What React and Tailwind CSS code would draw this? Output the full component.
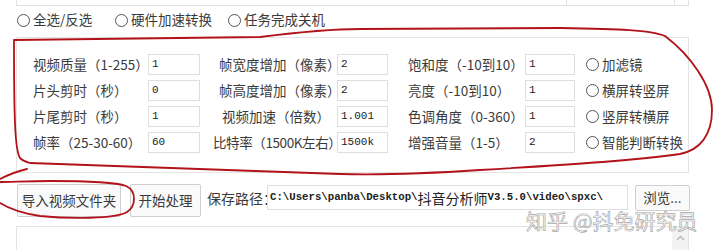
import React from "react";

const Radio = ({ label, className = "" }) => (
  <div className={`flex items-center ${className}`}>
    <span className="w-[13px] h-[13px] rounded-full border border-[#555] bg-white shrink-0" />
    <span className="ml-[3px] whitespace-nowrap">{label}</span>
  </div>
);

const Field = ({ value, w }) => (
  <div
    className={`${w} h-[21px] border border-[#dedede] bg-white flex items-center pl-[3px] text-[11px] text-[#222] shrink-0`}
    style={{ fontFamily: '"Liberation Mono", monospace' }}
  >
    {value}
  </div>
);

const rows = [
  { l1: "视频质量（1-255）", v1: "1", l2: "帧宽度增加（像素）", p2: "pl-[19px]", v2: "2", l3: "饱和度（-10到10）", v3: "1", r: "加滤镜" },
  { l1: "片头剪时（秒）", v1: "0", l2: "帧高度增加（像素）", p2: "pl-[19px]", v2: "2", l3: "亮度（-10到10）", v3: "1", r: "横屏转竖屏" },
  { l1: "片尾剪时（秒）", v1: "1", l2: "视频加速（倍数）", p2: "pl-[22px]", v2: "1.001", l3: "色调角度（0-360）", v3: "1", r: "竖屏转横屏" },
  { l1: "帧率（25-30-60）", v1: "60", l2: "比特率（1500K左右）", p2: "pl-[13px] tracking-[-0.4px]", v2: "1500k", l3: "增强音量（1-5）", v3: "2", r: "智能判断转换" },
];

export default function App() {
  return (
    <div
      className="relative w-[720px] h-[250px] bg-white overflow-hidden text-[13.5px] text-[#3a3a3a] leading-none"
      style={{ fontFamily: '"Noto Sans CJK SC", "Noto Sans", sans-serif' }}
    >
      {/* top list box */}
      <div className="ml-[16px] w-[673px] h-[6px] border-x border-b border-[#e2e2e2] flex">
        <div className="w-[550px] border-r border-[#e2e2e2]" />
        <div className="w-[108px] border-r border-[#e2e2e2]" />
      </div>

      {/* radios row */}
      <div className="mt-[6px] ml-[17px] h-[16px] flex items-center">
        <Radio label="全选/反选" className="w-[98px]" />
        <Radio label="硬件加速转换" className="w-[113px]" />
        <Radio label="任务完成关机" />
      </div>

      {/* group box */}
      <div className="mt-[9px] ml-[16px] w-[673px] h-[136px] border border-[#e4e4e4] pt-[16px] pl-[16px] flex flex-col gap-[5px]">
        {rows.map((r, i) => (
          <div key={i} className="flex items-center h-[21px]">
            <div className="w-[115px] whitespace-nowrap">{r.l1}</div>
            <Field value={r.v1} w="w-[52px]" />
            <div className={`w-[137px] whitespace-nowrap ${r.p2}`}>{r.l2}</div>
            <Field value={r.v2} w="w-[51px]" />
            <div className="w-[137px] whitespace-nowrap pl-[20px]">{r.l3}</div>
            <Field value={r.v3} w="w-[50px]" />
            <Radio label={r.r} className="ml-[11px]" />
          </div>
        ))}
      </div>

      {/* bottom action row */}
      <div className="mt-[11px] flex items-start h-[33px]">
        <div className="ml-[17px] w-[104px] h-[33px] border border-[#cfcfcf] rounded-[2px] bg-[#fafafa] flex items-center justify-center whitespace-nowrap">
          导入视频文件夹
        </div>
        <div className="ml-[9px] w-[71px] h-[33px] border border-[#cfcfcf] rounded-[2px] bg-[#fafafa] flex items-center justify-center whitespace-nowrap">
          开始处理
        </div>
        <div className="ml-[6px] w-[60px] h-[25px] mt-[1px] flex items-center whitespace-nowrap text-[14px]">
          保存路径：
        </div>
        <div
          className="w-[361px] h-[25px] mt-[1px] border border-[#dedede] bg-white flex items-center pl-[2px] text-[10.7px] text-[#222] whitespace-nowrap overflow-hidden font-bold"
          style={{ fontFamily: '"Liberation Mono", monospace' }}
        >
          C:\Users\panba\Desktop\
          <span
            className="text-[14px] font-normal"
            style={{ fontFamily: '"Noto Sans CJK SC", sans-serif' }}
          >
            抖音分析师
          </span>
          V3.5.0\video\spxc\
        </div>
        <div className="ml-[7px] w-[55px] h-[26px] mt-[1px] border border-[#cfcfcf] rounded-[2px] bg-[#fafafa] flex items-center justify-center whitespace-nowrap">
          浏览...
        </div>
      </div>

      {/* bottom list box */}
      <div className="mt-[9px] ml-[16px] w-[673px] h-[40px] border border-[#e4e4e4] flex justify-end">
        <div className="w-[16px] h-full bg-[#f3f3f3] flex justify-center pt-[8px]">
          <svg width="9" height="6" viewBox="0 0 9 6">
            <path d="M1 5 L4.5 1.5 L8 5" fill="none" stroke="#b5b5b5" strokeWidth="1.3" />
          </svg>
        </div>
      </div>

      {/* watermark */}
      <div
        className="absolute left-[526px] top-[210px] text-[21px] leading-none whitespace-nowrap text-white [-webkit-text-stroke:0.7px_#a8a8a8]"
        style={{ fontFamily: '"Noto Sans CJK SC", sans-serif' }}
      >
        知乎 @抖免研究员
      </div>

      {/* red annotations */}
      <svg className="absolute inset-0 pointer-events-none" width="720" height="250" viewBox="0 0 720 250">
        <g fill="none" stroke="#b3121a" strokeWidth="1.8" strokeLinecap="round" strokeLinejoin="round">
          <path d="M20 158 C15 150 14 120 14 40 L260 37 C300 32 330 29 360 29 L560 28 C620 29 650 30 665 36 C690 55 712 85 712 110 C712 135 700 150 680 154 C640 160 580 164 480 170 C420 174 380 175 340 174 C250 171 120 166 30 163 C26 162 22 160 20 158" />
          <path d="M0 179 C8 175 18 171 27 169" />
          <path d="M0 182 C10 182 30 181 50 181 C90 181 115 182 126 186 C137 191 136 206 127 212 C115 219 70 219 40 216 C20 213 8 208 0 203" />
        </g>
      </svg>
    </div>
  );
}
